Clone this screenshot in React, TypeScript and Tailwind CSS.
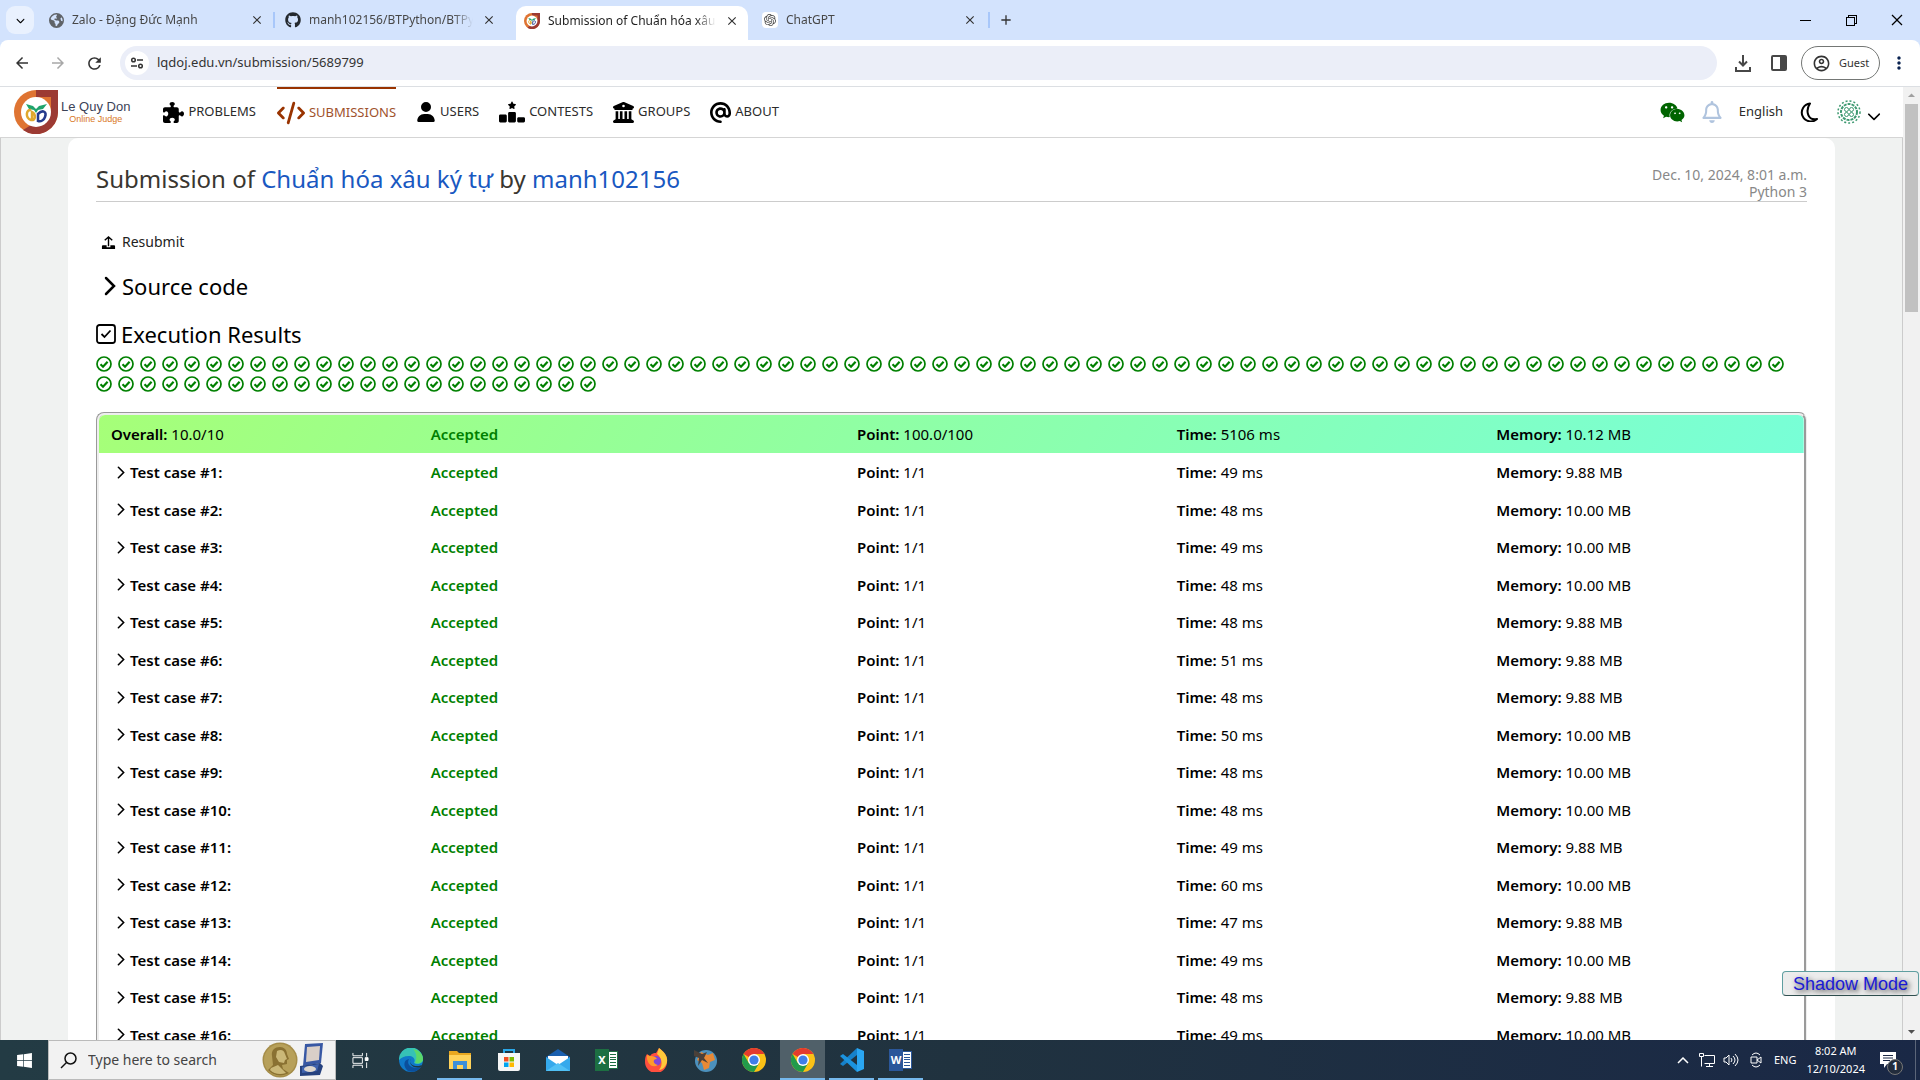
import React from "react";
import { FaPuzzlePiece, FaCode, FaUser, FaRankingStar, FaBuildingColumns, FaAt, FaWeixin, FaRegBell, FaChevronDown, FaGithub, FaWindows, FaEarthAmericas } from "react-icons/fa6";
import { SiOpenai } from "react-icons/si";
import { MdArrowBack, MdArrowForward, MdRefresh, MdOutlineAccountCircle, MdMoreVert, MdClose, MdAdd, MdArrowDropUp, MdArrowDropDown } from "react-icons/md";
import { VscChromeMinimize, VscChromeRestore, VscChromeClose } from "react-icons/vsc";

const results: [number, string][] = [
  [49, "9.88"], [48, "10.00"], [49, "10.00"], [48, "10.00"], [48, "9.88"], [51, "9.88"], [48, "9.88"], [50, "10.00"],
  [48, "10.00"], [48, "10.00"], [49, "9.88"], [60, "10.00"], [47, "9.88"], [49, "10.00"], [48, "9.88"], [49, "10.00"],
];

function Shield({ className }: { className: string }) {
  return (
    <svg viewBox="0 0 44 44" className={className} aria-hidden="true">
      <path d="M22 0A22 22 0 0 0 22 44A22 22 0 0 0 22 0Z" fill="#df7432" />
      <path d="M22 0H44V22A22 22 0 0 1 9 40L22 32Z" fill="#9c3a33" />
      <path d="M22 7h15v15H22Z" fill="#df7432" />
      <circle cx="22" cy="22" r="15" fill="#fff" />
      <path d="M12 14l7 2 3 3 3-3 8-2-4 5-5 1-2 3-2-3-5-1Z" fill="#1fa36c" />
      <path d="M17 20c-5-1-6 8 0 10 5 1 5-6 1-8v9" fill="none" stroke="#e0a82e" strokeWidth="2.500" />
      <path d="M24 23v9m0-8c5-5 9-2 7 3-1 3-4 5-7 4" fill="none" stroke="#243a8c" strokeWidth="2.500" />
    </svg>
  );
}

function Tab({ icon, title, active, className }: { icon: React.ReactNode; title: string; active?: boolean; className: string }) {
  return (
    <div className={`flex items-center gap-2 pr-2 pl-2 ${active ? "mt-[6px] h-[34px] rounded-t-[10px] bg-white pb-[5px] text-[#1f1f1f]" : "h-10 text-[#474747]"} ${className}`}>
      {icon}
      <span className="min-w-0 flex-1 overflow-hidden text-xs whitespace-nowrap [mask-image:linear-gradient(to_right,#000_88%,transparent)]">{title}</span>
      <button aria-label={`Close ${title}`} className="flex size-4 items-center justify-center text-[#333]"><MdClose size={14} /></button>
    </div>
  );
}

function Browser() {
  return (
    <div className="shrink-0 bg-[#d3e3fd]">
      <div className="flex h-10 items-center">
        <button aria-label="Search tabs" className="ml-[6px] flex size-7 items-center justify-center rounded-[9px] bg-[#e9f1fe]"><FaChevronDown size={9} /></button>
        <Tab className="ml-[7px] w-[232px]" icon={<FaEarthAmericas size={15} className="text-[#5f6368]" />} title="Zalo - Đặng Đức Mạnh" />
        <i className="h-4 w-0.5 bg-[#a8c7fa]" />
        <Tab className="ml-[2px] w-[228px]" icon={<FaGithub size={16} className="shrink-0 text-[#24292f]" />} title="manh102156/BTPython/BTPython" />
        <Tab active className="ml-[11px] w-[232px]" icon={<Shield className="size-4 shrink-0" />} title="Submission of Chuẩn hóa xâu ký tự" />
        <Tab className="ml-[6px] w-[232px]" icon={<span className="flex size-4 items-center justify-center rounded bg-white"><SiOpenai size={12} /></span>} title="ChatGPT" />
        <i className="ml-[2px] h-4 w-0.5 bg-[#a8c7fa]" />
        <button aria-label="New tab" className="ml-2 text-[#333]"><MdAdd size={16} /></button>
        <div className="ml-auto flex items-center gap-[30px] pr-[15px] text-black">
          <button aria-label="Minimize"><VscChromeMinimize size={16} /></button>
          <button aria-label="Restore"><VscChromeRestore size={16} /></button>
          <button aria-label="Close"><VscChromeClose size={16} /></button>
        </div>
      </div>
      <div className="flex h-[47px] items-center rounded-t-lg border-b border-[#dcdfe3] bg-white pr-[11px] pl-[13px] text-[#333]">
        <button aria-label="Back"><MdArrowBack size={18} /></button>
        <button aria-label="Forward" className="ml-[18px] text-[#a8a8a8]"><MdArrowForward size={18} /></button>
        <button aria-label="Reload" className="ml-[18px]"><MdRefresh size={19} /></button>
        <div className="ml-4 flex h-[34px] flex-1 items-center rounded-full bg-[#ebeef8] pl-[5px]">
          <span className="flex size-6 items-center justify-center rounded-full bg-white">
            <svg viewBox="0 0 14 14" className="size-[14px]" fill="none" stroke="#333" strokeWidth="1.500"><circle cx="3.500" cy="4" r="1.800" /><path d="M7 4h6M1 10h6" /><circle cx="10.500" cy="10" r="1.800" /></svg>
          </span>
          <input aria-label="Address" defaultValue="lqdoj.edu.vn/submission/5689799" className="ml-2 flex-1 bg-transparent text-[13px] text-[#333] outline-none" />
        </div>
        <button aria-label="Downloads" className="ml-[17px]">
          <svg viewBox="0 0 18 18" className="size-[18px]" fill="none" stroke="#474747" strokeWidth="2"><path d="M9 1v10M5 7.500l4 4 4-4M2 13v4h14v-4" /></svg>
        </button>
        <button aria-label="Side panel" className="ml-[19px]">
          <svg viewBox="0 0 16 16" className="size-4"><rect x="1" y="1" width="14" height="14" rx="1" fill="none" stroke="#474747" strokeWidth="2" /><path d="M9 1h6v14H9Z" fill="#474747" /></svg>
        </button>
        <button className="ml-[14px] flex h-[34px] w-[79px] items-center gap-2 rounded-full border border-[#747775] pl-[10px] text-[11px]"><MdOutlineAccountCircle size={19} />Guest</button>
        <button aria-label="Menu" className="ml-[9px] text-[#0a2351]"><MdMoreVert size={20} /></button>
      </div>
    </div>
  );
}

function Nav() {
  const link = "flex h-full items-center gap-1";
  return (
    <nav className="flex h-[51px] shrink-0 items-center border-b border-[#d5d5d5] bg-white pr-[22px] pl-[14px] text-[13px] text-[#2b2b2b]">
      <a href="#home" className="flex items-center gap-[3px]">
        <Shield className="size-[44px]" />
        <span className="flex flex-col items-center font-['Liberation_Sans']"><span className="text-[13px] leading-[14px] text-[#3c4257]">Le Quy Don</span><span className="text-[9px] leading-[11px] text-[#d9781e]">Online Judge</span></span>
      </a>
      <a href="#problems" className={`${link} ml-[33px]`}><FaPuzzlePiece size={21} color="#000" />PROBLEMS</a>
      <a href="#submissions" className={`${link} ml-[21px] border-t-2 border-[#993300] text-[#a0522d]`}><FaCode size={28} color="#993300" />SUBMISSIONS</a>
      <a href="#users" className={`${link} ml-5`}><FaUser size={20} color="#000" />USERS</a>
      <a href="#contests" className={`${link} ml-5`}><FaRankingStar size={26} color="#000" />CONTESTS</a>
      <a href="#groups" className={`${link} ml-5`}><FaBuildingColumns size={21} color="#000" />GROUPS</a>
      <a href="#about" className={`${link} ml-5`}><FaAt size={21} color="#000" />ABOUT</a>
      <a href="#chat" aria-label="Chat" className="ml-auto text-[#006400]"><FaWeixin size={25} /></a>
      <a href="#alerts" aria-label="Notifications" className="ml-4 text-[#b0c4de]"><FaRegBell size={22} /></a>
      <button className="ml-4">English</button>
      <button aria-label="Dark mode" className="ml-4 text-black">
        <svg viewBox="0 0 20 20" className="size-5" fill="none" stroke="currentColor" strokeWidth="2"><path d="M11 1.500A9 9 0 1 0 18 17C9 19 6 9 11 1.500Z" strokeLinejoin="round" /></svg>
      </button>
      <button aria-label="Account" className="ml-[18px] flex items-center gap-[6px]">
        <svg viewBox="0 0 24 24" className="size-6" fill="none" stroke="#3d9970"><circle cx="12" cy="12" r="11" strokeDasharray="2 2" strokeWidth="1.500" /><circle cx="12" cy="12" r="8" strokeDasharray="3 1" strokeWidth="2" /><circle cx="9.500" cy="9.500" r="2" /><circle cx="14.500" cy="9.500" r="2" /><circle cx="9.500" cy="14.500" r="2" /><circle cx="14.500" cy="14.500" r="2" /></svg>
        <FaChevronDown size={14} color="#000" className="mt-2" />
      </button>
    </nav>
  );
}

function Chevron({ className }: { className: string }) {
  return <svg viewBox="0 0 12 20" className={className} fill="none" stroke="#000" strokeWidth="2.500" strokeLinecap="round"><path d="m2 2 8 8-8 8" /></svg>;
}

function UploadIcon() {
  return <svg viewBox="0 0 16 16" className="size-[15px]"><path d="M8 12V2M4 5.500 8 2l4 3.500" fill="none" stroke="#000" strokeWidth="1.500" /><path d="M2 11h4v2h4v-2h4a1 1 0 0 1 1 1v3H1v-3a1 1 0 0 1 1-1Z" fill="#000" /></svg>;
}

function CheckCircle() {
  return <svg viewBox="0 0 16 16" className="size-4" fill="none" stroke="currentColor"><circle cx="8" cy="8" r="7" strokeWidth="1.700" /><path d="m4.500 8.300 2.500 2.400 4.600-5" strokeWidth="2.200" /></svg>;
}

function Submission() {
  return (
    <main className="mx-[67px] rounded-t-[10px] bg-white px-7 pt-[25px]">
      <header className="flex items-end justify-between border-b border-[#ccc]">
        <h1 className="pb-[6px] text-2xl text-[#393630]">Submission of <a href="#problem" className="text-[#1958c1]">Chuẩn hóa xâu ký tự</a> by <a href="#user" className="text-[#1958c1]">manh102156</a></h1>
        <div className="pb-px text-right text-sm leading-[17px] text-[#888]">Dec. 10, 2024, 8:01 a.m.<br />Python 3</div>
      </header>
      <button className="mt-[30px] ml-[5px] flex h-5 items-center gap-[6px] text-sm text-[#222]"><UploadIcon />Resubmit</button>
      <button className="mt-[18px] ml-2 flex items-center gap-[6px] text-[22px] leading-[32px] text-black"><Chevron className="h-5 w-3" />Source code</button>
      <h2 className="mt-4 flex items-center gap-[5px] text-[22px] leading-[32px] text-black">
        <svg viewBox="0 0 20 20" className="size-5" fill="none" stroke="#000" strokeWidth="1.800"><rect x="1" y="1" width="18" height="18" rx="2.500" /><path d="m5.500 10 3 3 6-6.500" /></svg>
        Execution Results
      </h2>
      <div className="mt-[6px] flex flex-wrap gap-1 text-[green]">
        {Array.from({ length: 100 }, (_, i) => <span key={i} className="w-[18px]"><CheckCircle /></span>)}
      </div>
      <table className="mt-5 w-full table-fixed border-separate border-spacing-0 rounded-lg border-[3px] border-[#eee] text-left text-[15px] leading-[22px] text-black [border-style:groove]">
        <colgroup><col className="w-3/16" /><col className="w-4/16" /><col className="w-3/16" /><col className="w-3/16" /><col className="w-3/16" /></colgroup>
        <tbody>
          <tr className="h-[38px] bg-linear-[120deg,#a6ff78,#96ff96_30%,#78ffd7] [&>td]:pl-3">
            <td className="rounded-tl-md"><b className="font-semibold">Overall:</b> 10.0/10</td>
            <td className="font-semibold text-[green]">Accepted</td>
            <td><b className="font-semibold">Point:</b> 100.0/100</td>
            <td><b className="font-semibold">Time:</b> 5106 ms</td>
            <td className="rounded-tr-md"><b className="font-semibold">Memory:</b> 10.12 MB</td>
          </tr>
          {results.map(([time, memory], i) => (
            <tr key={i} className="odd:h-[37px] even:h-[38px] [&>td]:pl-3">
              <td><button className="ml-[6px] flex items-center gap-[5px] font-semibold"><Chevron className="h-[13px] w-2" />Test case #{i + 1}:</button></td>
              <td className="font-semibold text-[green]">Accepted</td>
              <td><b className="font-semibold">Point:</b> 1/1</td>
              <td><b className="font-semibold">Time:</b> {time} ms</td>
              <td><b className="font-semibold">Memory:</b> {memory} MB</td>
            </tr>
          ))}
        </tbody>
      </table>
    </main>
  );
}

const ChromeIcon = () => (
  <svg viewBox="0 0 24 24" className="size-6"><circle cx="12" cy="12" r="12" fill="#fbc116" /><path d="M12 12 1.600 6A12 12 0 0 1 22.400 6H12Z" fill="#e33b2e" /><path d="M1.600 6A12 12 0 0 0 12 24l5.200-9L12 12 6.800 15Z" fill="#229a4b" /><circle cx="12" cy="12" r="6" fill="#fff" /><circle cx="12" cy="12" r="4.600" fill="#3f7ee8" /></svg>
);

const apps: { name: string; open?: string; icon: React.ReactNode }[] = [
  { name: "Edge", icon: <svg viewBox="0 0 24 24" className="size-6"><circle cx="12" cy="12" r="12" fill="#0f79c9" /><path d="M0 12A12 12 0 0 1 24 11c0 5-6 6-9 4 2-4-1-7-5-7-5 0-8 2-10 4Z" fill="#36c2b6" /><path d="M14 1c6 1 10 5 10 10 0 4-4 5-8 4 2-5 2-9-2-14Z" fill="#5bd86a" /><path d="M10 11c-3 5 2 11 12 8-3 4-8 6-13 4-5-4-5-11 1-12Z" fill="#0b4f9c" /><path d="M12 11c-2 3 0 6 4 7 3 0 5 0 7-1l-1 2c-7 2-13-2-10-8Z" fill="#213843" /></svg> },
  { name: "File Explorer", open: "border-b-[#76b9ed]", icon: <svg viewBox="0 0 24 24" className="size-6"><path d="M1 3h8l2 2h12v16H1Z" fill="#e9a820" /><path d="M1 7h22v14H1Z" fill="#ffd35b" /><path d="M5 21v-8h14v8h-4v-4H9v4Z" fill="#3e8fd8" /></svg> },
  { name: "Microsoft Store", icon: <svg viewBox="0 0 24 24" className="size-6"><path d="M7 6V2h10v4" fill="none" stroke="#2aa7e8" strokeWidth="2" /><path d="M1 5h22v16a2 2 0 0 1-2 2H3a2 2 0 0 1-2-2Z" fill="#f6f6f6" /><path d="M7 9h4.500v4.500H7Z" fill="#f25022" /><path d="M12.500 9H17v4.500h-4.500Z" fill="#7fba00" /><path d="M7 14.500h4.500V19H7Z" fill="#00a4ef" /><path d="M12.500 14.500H17V19h-4.500Z" fill="#ffb900" /></svg> },
  { name: "Mail", icon: <svg viewBox="0 0 24 24" className="size-6"><path d="M0 9 12 1l12 8v14H0Z" fill="#1a5fae" /><path d="M2 8h20v6l-10 5L2 14Z" fill="#fff" /><path d="m0 9 12 8 12-8v14H0Z" fill="#35a9ec" /><path d="m0 23 12-8 12 8Z" fill="#50c0f5" /></svg> },
  { name: "Excel", icon: <OfficeIcon letter="X" front="bg-[#1d6f42]" page="border-[#1d6f42]" /> },
  { name: "Firefox", icon: <svg viewBox="0 0 24 24" className="size-6"><path d="M3 6l3 2c2-3 4-3 6-3l3-5c5 4 9 8 8 14a11 11 0 0 1-22 0c0-3 0-5 2-8Z" fill="#ff4f3e" /><path d="M15 0c5 4 9 8 8 14-1 4-4 8-8 8 5-6 2-13-2-16Z" fill="#ffc83a" /><circle cx="12" cy="13" r="5" fill="#8246d9" /><path d="M3 7c4 2 8 0 10 4-5 0-4 5 1 6-6 4-12-2-11-10Z" fill="#ff9a2b" /></svg> },
  { name: "World tool", icon: <svg viewBox="0 0 24 24" className="size-6"><circle cx="13" cy="13" r="11" fill="#4c91bd" /><path d="M8 4l7 3 5-2 2 7-5 2-1 6-5 2-2-7-5-3Z" fill="#e88936" /><path d="M1 2l8 4 5-2-3 6 4 5-6-3-4 6 1-8-5-2Z" fill="#4a4039" /></svg> },
  { name: "Chrome", icon: <ChromeIcon /> },
  { name: "Chrome window", open: "border-b-[#76b9ed] bg-[#506069]", icon: <ChromeIcon /> },
  { name: "VS Code", open: "border-b-[#76b9ed]", icon: <svg viewBox="0 0 24 24" className="size-6"><path d="m17 0 7 3v18l-7 3Z" fill="#2aa6f2" /><path d="M17 0v7L3 18l-3-2Z" fill="#1681ca" /><path d="M17 24v-7L3 6 0 8Z" fill="#1b93df" /></svg> },
  { name: "Word", open: "border-b-[#76b9ed]", icon: <OfficeIcon letter="W" front="bg-[#2b579a]" page="border-[#2b579a]" /> },
];

function OfficeIcon({ letter, front, page }: { letter: string; front: string; page: string }) {
  return (
    <span className="flex items-center">
      <span className={`flex h-[22px] w-[14px] items-center justify-center text-[11px] font-bold text-white ${front}`}>{letter}</span>
      <span className={`flex h-[18px] w-[9px] flex-col justify-evenly border-y border-r bg-white px-px ${page}`}>
        <i className={`border-t ${page}`} /><i className={`border-t ${page}`} /><i className={`border-t ${page}`} /><i className={`border-t ${page}`} /><i className={`border-t ${page}`} />
      </span>
    </span>
  );
}

function Taskbar() {
  return (
    <footer className="flex h-10 shrink-0 items-center bg-linear-to-r from-[#233b44] via-[#20323f] to-[#1a2846] text-white">
      <button aria-label="Start" className="flex w-12 justify-center"><FaWindows size={17} /></button>
      <label className="flex h-10 w-[288px] items-center border border-[#bbb] bg-[#f2f2f2] pl-[11px] text-[#333]">
        <svg viewBox="0 0 17 17" className="size-[17px]" fill="none" stroke="#111" strokeWidth="1.500"><circle cx="10.500" cy="6.500" r="5.500" /><path d="M6.500 10.500 1 16" /></svg>
        <input aria-label="Search" placeholder="Type here to search" className="ml-[11px] w-0 flex-1 bg-transparent text-sm outline-none placeholder:text-[#444]" />
        <svg viewBox="0 0 64 36" className="mr-[9px] h-9 w-16">
          <circle cx="18" cy="18" r="17.500" fill="#a58d49" /><circle cx="18" cy="18" r="16" fill="#b7a05a" />
          <path d="M10 14c-1-6 3-9 8-9 4 0 7 3 7 7l2 5-2 1v4l-5 1 1 4 6 4c-7 4-16 3-21-3l5-5Z" fill="#8a7132" />
          <path d="M15 9c4-2 7-1 8 3l2 5-2 1-1 3-5-1-3-5Z" fill="#cbb878" /><path d="m9 26 7-3 4 4 4 4c-6 2-12 1-16-3Z" fill="#cbb878" />
          <path d="m43 2 18-1-2 20-18 3Z" fill="#3858a4" /><path d="m45 5 13-1-1 14-13 2Z" fill="#d9cfc8" /><path d="m38 24 20-3 3 3-3 9-20 1Z" fill="#26427f" /><path d="m40 25 17-3-2 7-15 2Z" fill="#3f62ad" /><ellipse cx="48" cy="27" rx="6" ry="3" fill="#ddd6ce" />
        </svg>
      </label>
      <button aria-label="Task view" className="mr-0.5 flex w-12 justify-center"><svg viewBox="0 0 18 18" className="size-[17px]" fill="none" stroke="#fff"><path d="M1 1v3h10V1M1 6h10v6H1ZM1 17v-3h10v3M15.500 1v4m0 6v6" /><path d="M14 6h3v3h-3Z" fill="#fff" /></svg></button>
      {apps.map((a) => (
        <button key={a.name} aria-label={a.name} className="flex h-10 w-[49px] justify-center px-0.5"><span className={`flex h-full w-full items-center justify-center border-y-2 border-transparent ${a.open ?? ""}`}>{a.icon}</span></button>
      ))}
      <div className="ml-auto flex h-full items-center text-xs">
        <svg viewBox="0 0 12 7" className="h-[7px] w-3" fill="none" stroke="#fff" strokeWidth="1.500"><path d="m1 6 5-5 5 5" /></svg>
        <svg viewBox="0 0 16 14" className="ml-[10px] h-[14px] w-4" fill="none" stroke="#fff"><path d="M5.500 2.500h10v8h-10M10.500 10.500v3M7 13.500h7M.500.500h4v3h-4ZM2.500 3.500v10" /></svg>
        <svg viewBox="0 0 16 14" className="ml-2 h-[14px] w-4" fill="none" stroke="#fff"><path d="M1 5h2l3-3v10L3 9H1ZM8 5q2 2 0 4M10 3q4 4 0 8M12 1q6 6 0 12" /></svg>
        <svg viewBox="0 0 12 16" className="ml-[11px] h-4 w-3" fill="none" stroke="#fff"><path d="M1 5h6v6H1ZM7 8l4-3v6ZM2 3q4-4 8 0M2 13q4 4 8 0" /></svg>
        <span className="ml-3 text-[11px]">ENG</span>
        <span className="ml-[10px] text-center text-[11px] leading-[18px]">8:02 AM<br />12/10/2024</span>
        <button aria-label="Notifications" className="relative mr-3 ml-[14px] w-6">
          <svg viewBox="0 0 18 18" className="size-[18px]"><path d="M1 1h16v12H8l-3 4v-4H1Z" fill="#fff" /><path d="M4 4.500h10M4 7h10M4 9.500h7" stroke="#1c2946" /></svg>
          <span className="absolute top-2 left-2 flex size-4 items-center justify-center rounded-full border border-[#777] bg-[#222c3c] text-[10px] font-bold">1</span>
        </button>
        <i className="mr-[4px] h-full w-px bg-[#5b6579]" />
      </div>
    </footer>
  );
}

export default function App() {
  return (
    <div className="flex h-screen flex-col overflow-hidden bg-white font-['Noto_Sans',sans-serif]">
      <Browser />
      <div className="relative flex min-h-0 flex-1">
        <div className="flex min-w-0 flex-1 flex-col">
          <Nav />
          <div className="min-h-0 flex-1 overflow-hidden border-x border-[#ccc] bg-[#f0f2f1]"><Submission /></div>
        </div>
        <div className="flex w-[17px] shrink-0 flex-col items-center bg-[#f1f1f1]">
          <MdArrowDropUp size={17} className="shrink-0 text-[#a0a0a0]" />
          <div className="h-[208px] w-[13px] bg-[#c1c1c1]" />
          <MdArrowDropDown size={17} className="mt-auto shrink-0 text-[#505050]" />
        </div>
        <button className="absolute right-px bottom-11 flex h-[25px] w-[137px] items-center justify-center rounded border border-[#5f9ea0] border-b-[#2f4f4f] bg-[#ececec] font-['Liberation_Sans'] text-lg text-[#1a1ad6] [text-shadow:2px_2px_5px_#333]">Shadow Mode</button>
      </div>
      <Taskbar />
    </div>
  );
}
